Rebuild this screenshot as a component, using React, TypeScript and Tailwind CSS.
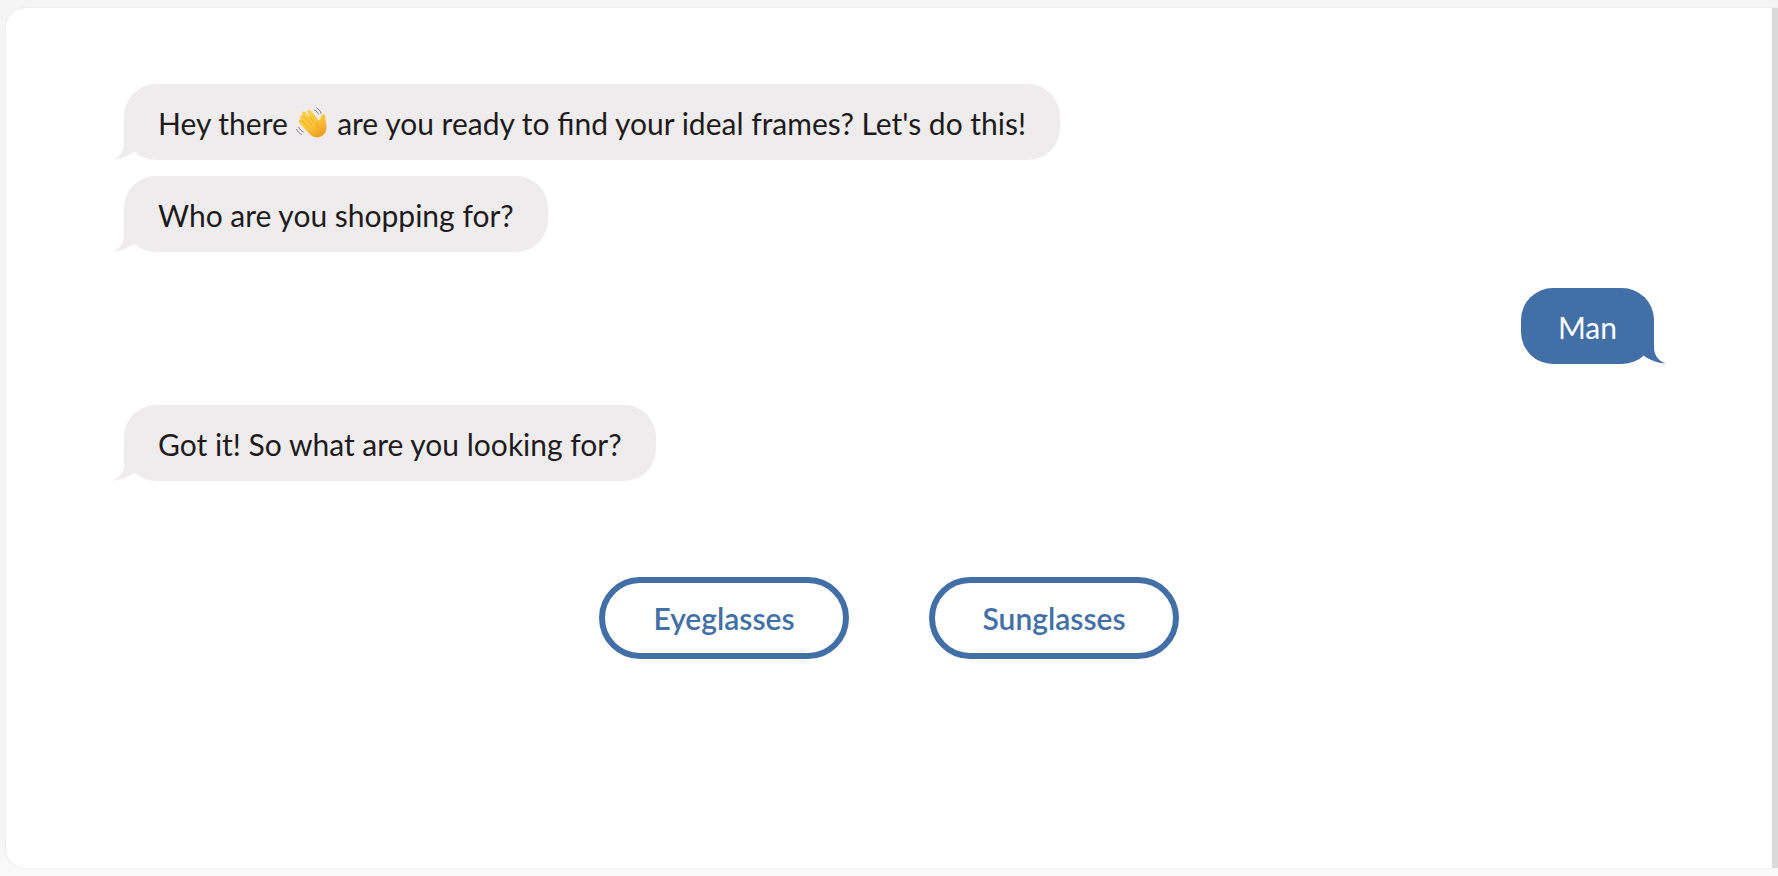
import type { ReactNode } from "react";

function WaveIcon() {
  return (
    <svg
      role="img"
      aria-label="waving hand"
      viewBox="0 0 60 60"
      className="mx-px inline-block size-8 align-[-4px]"
    >
      <defs>
        <linearGradient id="skin" x1="0" y1="0" x2="0.6" y2="1">
          <stop offset="0" stopColor="#fdd250" />
          <stop offset="0.6" stopColor="#fcc638" />
          <stop offset="1" stopColor="#f0a027" />
        </linearGradient>
      </defs>
      <path
        d="M9 23C5 18 9 14 13 17L12 15C9 10 14 6 18 10L26 19L22 11C19 6 24 3 28 7L43 26C46 24 46 21 47 17C49 12 56 13 55 18C54 24 58 31 57 40C56 51 48 57 39 57C32 57 27 53 22 47L7 31C3 26 6 23 10 24Z"
        fill="url(#skin)"
      />
      <path
        d="M10 24L24 38M13 17L30 34M26 19L35 30M43 26C38 30 38 35 41 39"
        fill="none"
        stroke="#e39a25"
        strokeWidth="1.4"
        strokeLinecap="round"
      />
      <path
        d="M35 6C38 7 41 10 42 13M39 2C43 4 46 8 47 12M5 38C7 42 10 45 14 47M1 42C3 46 6 49 10 51"
        fill="none"
        stroke="#77777b"
        strokeWidth="1.8"
        strokeLinecap="round"
      />
    </svg>
  );
}

function Tail({ className }: { className: string }) {
  return (
    <svg aria-hidden="true" viewBox="0 0 24 44" className={className}>
      <path d="M12 0L12 27C12 35 8 41 0 43.500C9 43 16 40 22 36L24 30Z" />
    </svg>
  );
}

function BotMessage({ children }: { children: ReactNode }) {
  return (
    <p className="relative w-fit rounded-[32px] bg-[#eeeced] px-[34px] pt-[17px] pb-[15px] text-[#1f1b1c]">
      <Tail className="absolute bottom-0 -left-3 h-11 w-6 fill-[#eeeced]" />
      {children}
    </p>
  );
}

function UserMessage({ children }: { children: ReactNode }) {
  return (
    <p className="relative w-fit self-end rounded-[32px] bg-[#426fa5] px-[37px] pt-[17px] pb-[15px] text-white">
      <Tail className="absolute -right-3 bottom-0 h-11 w-6 -scale-x-100 fill-[#426fa5]" />
      {children}
    </p>
  );
}

function Choice({ children }: { children: ReactNode }) {
  return (
    <button
      type="button"
      className="w-[250px] rounded-full border-6 border-[#426fa5] py-[13px] text-center font-semibold text-[#426fa5]"
    >
      {children}
    </button>
  );
}

export default function App() {
  return (
    <div className="flex min-h-screen flex-col bg-linear-to-b from-[#f5f5f5] from-95% to-[#fafafa] pt-2 pb-2 pl-1.5 font-['Lato',sans-serif] text-[30px] leading-[44px]">
      <main className="flex grow flex-col rounded-l-[20px] border-r-6 border-[#dadada] bg-white pt-[76px] pr-[118px] pb-16 pl-[118px] shadow-[0_0_3px_rgba(0,0,0,0.08)]">
        <section aria-label="Conversation" className="flex flex-col">
          <BotMessage>
            Hey there <WaveIcon /> are you ready to find your ideal frames? Let's do this!
          </BotMessage>
          <div className="mt-4">
            <BotMessage>Who are you shopping for?</BotMessage>
          </div>
          <div className="mt-9 flex flex-col">
            <UserMessage>Man</UserMessage>
          </div>
          <div className="mt-[41px]">
            <BotMessage>Got it! So what are you looking for?</BotMessage>
          </div>
        </section>
        <div className="mt-24 flex justify-center gap-20">
          <Choice>Eyeglasses</Choice>
          <Choice>Sunglasses</Choice>
        </div>
      </main>
    </div>
  );
}
